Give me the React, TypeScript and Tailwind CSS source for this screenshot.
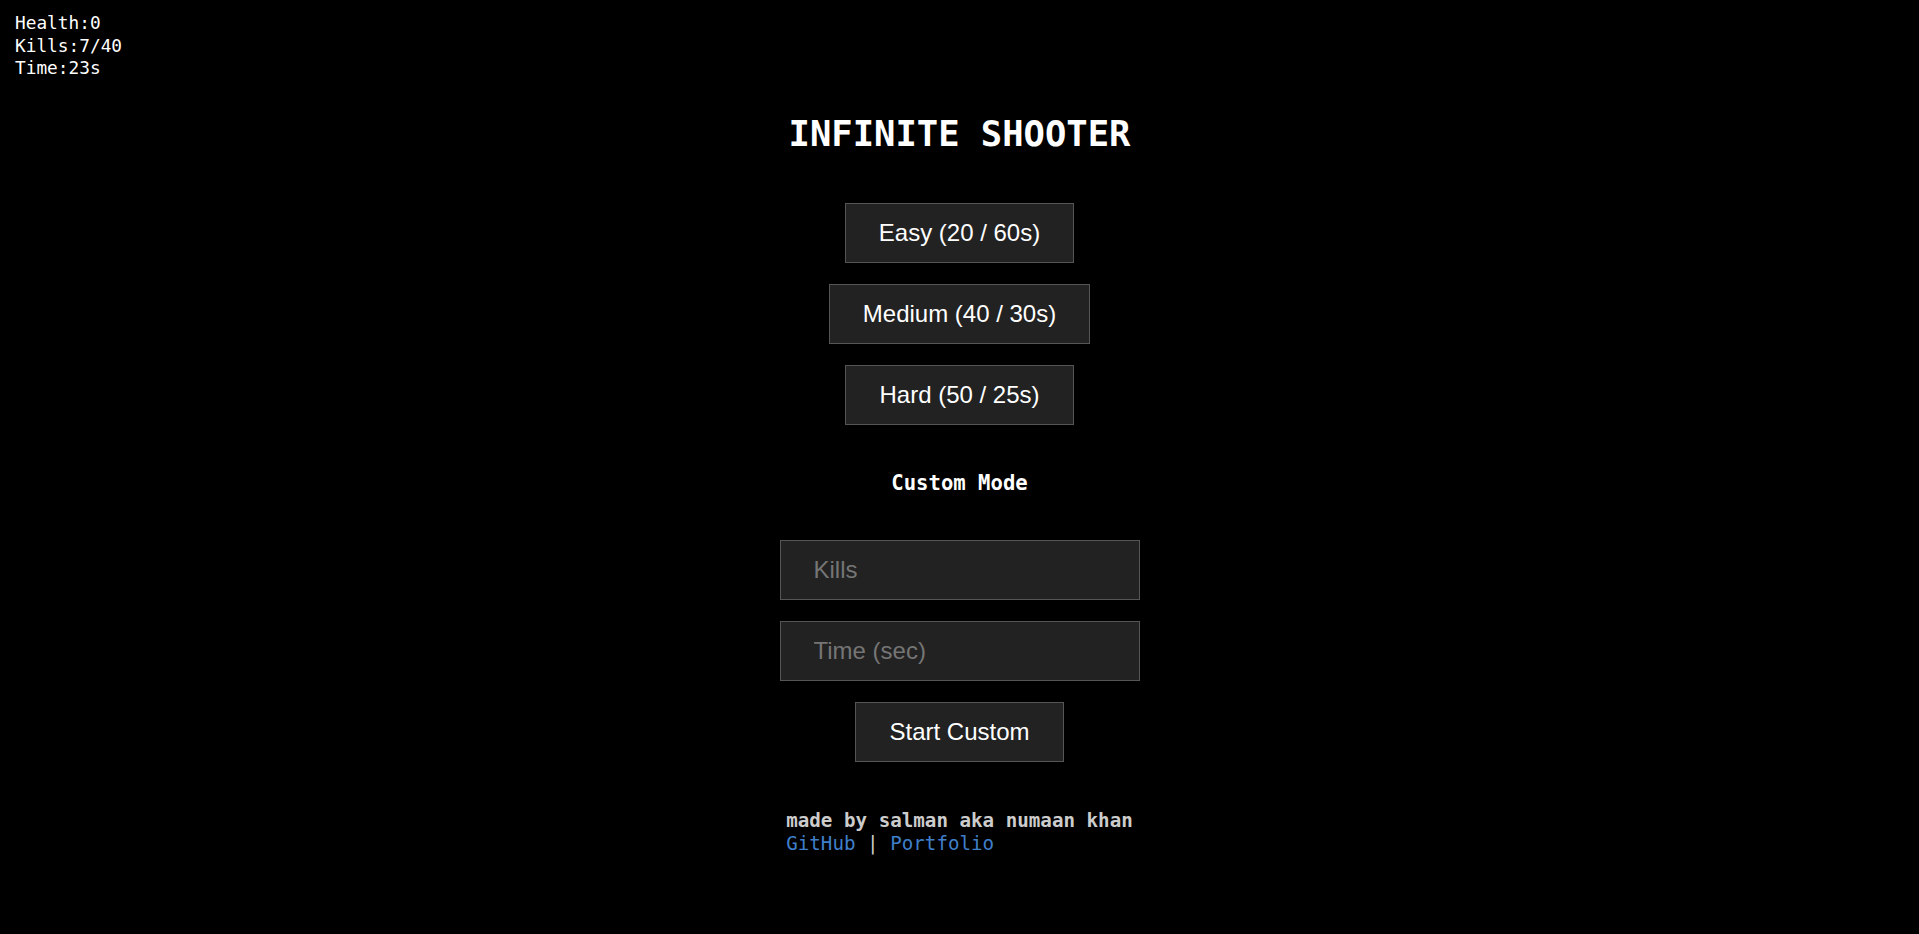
import React from "react";

const mono = "font-['DejaVu_Sans_Mono',monospace]";
const sans = "font-['Liberation_Sans',Arial,sans-serif]";

function ModeButton({ label }: { label: string }) {
  return (
    <button
      className={`${sans} h-[60px] px-[33px] border border-[#555] bg-[#222] text-white text-[24px] leading-none cursor-pointer`}
    >
      {label}
    </button>
  );
}

export default function App() {
  return (
    <div className="relative h-screen min-h-screen overflow-hidden bg-black">
      <div className={`${mono} absolute top-[12px] left-[15px] text-white text-[17.8px] leading-[22.5px]`}>
        <div>Health:0</div>
        <div>Kills:7/40</div>
        <div>Time:23s</div>
      </div>

      <div className="flex flex-col items-center pt-[116px]">
        <h1 className={`${mono} text-white font-bold text-[35.5px] leading-[35px]`}>INFINITE SHOOTER</h1>

        <div className="mt-[52px] flex flex-col items-center gap-[21px]">
          <ModeButton label="Easy (20 / 60s)" />
          <ModeButton label="Medium (40 / 30s)" />
          <ModeButton label="Hard (50 / 25s)" />
        </div>

        <h2 className={`${mono} mt-[48px] text-white font-bold text-[20.6px] leading-[20px]`}>Custom Mode</h2>

        <div className="mt-[47px] flex flex-col items-center gap-[21px]">
          <input
            type="number"
            placeholder="Kills"
            className={`${sans} w-[360px] h-[60px] border border-[#555] bg-[#222] pl-[33px] text-white text-[24px] placeholder:text-[#757575] outline-none`}
          />
          <input
            type="number"
            placeholder="Time (sec)"
            className={`${sans} w-[360px] h-[60px] border border-[#555] bg-[#222] pl-[33px] text-white text-[24px] placeholder:text-[#757575] outline-none`}
          />
          <ModeButton label="Start Custom" />
        </div>

        <div className={`${mono} mt-[47px] w-fit text-left text-[19.2px] leading-[23px] text-[#ccc]`}>
          <div className="font-bold">made by salman aka numaan khan</div>
          <div>
            <a className="text-[#3f7fca]" href="#">GitHub</a>
            <span> | </span>
            <a className="text-[#3f7fca]" href="#">Portfolio</a>
          </div>
        </div>
      </div>
    </div>
  );
}
